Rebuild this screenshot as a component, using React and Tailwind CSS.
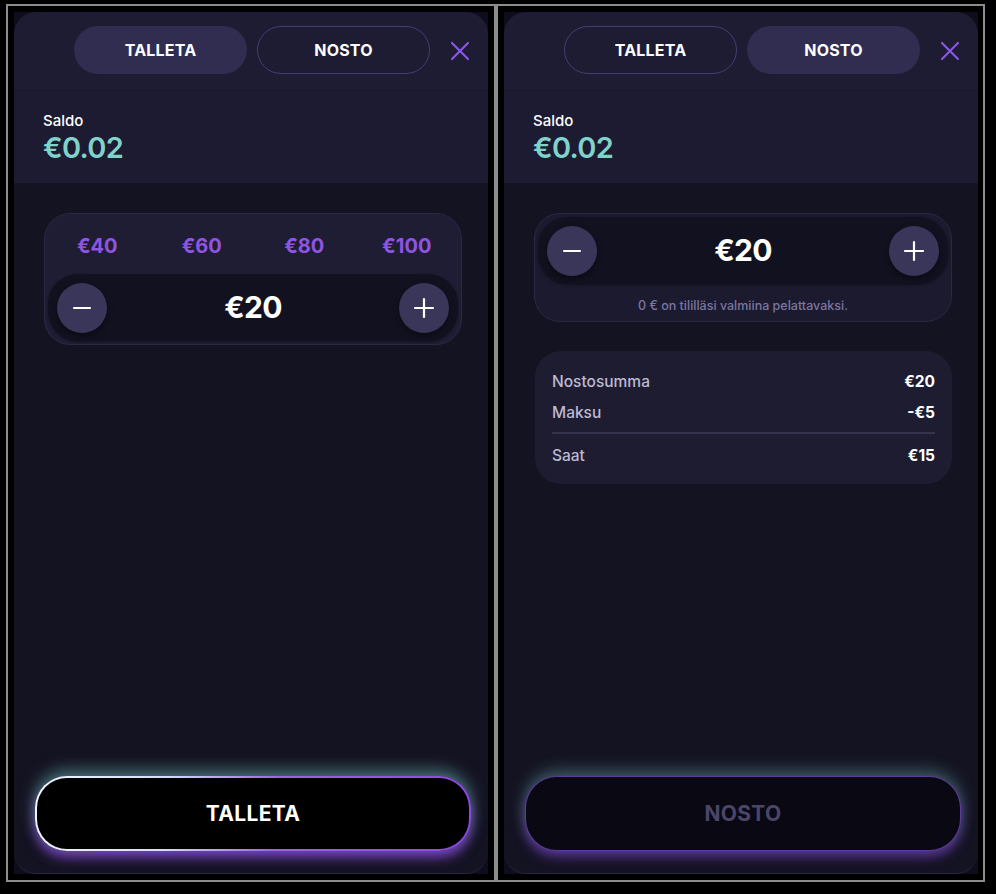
import React from "react";

const font = { fontFamily: "Inter, 'Noto Sans', sans-serif" };

const CloseIcon = () => (
  <svg width="22" height="22" viewBox="0 0 22 22" fill="none" stroke="#8b55e6" strokeWidth="2.2" strokeLinecap="round">
    <path d="M3 3 L19 19 M19 3 L3 19" />
  </svg>
);

const MinusIcon = () => (
  <svg width="20" height="20" viewBox="0 0 20 20" fill="none" stroke="#ffffff" strokeWidth="2.2" strokeLinecap="round">
    <path d="M2 10 H18" />
  </svg>
);

const PlusIcon = () => (
  <svg width="22" height="22" viewBox="0 0 22 22" fill="none" stroke="#ffffff" strokeWidth="2.2" strokeLinecap="round">
    <path d="M2 11 H20 M11 2 V20" />
  </svg>
);

const RoundBtn = ({ children }) => (
  <div className="w-[50px] h-[50px] rounded-full bg-[#3a3659] flex items-center justify-center shadow-[0_3px_6px_rgba(0,0,0,0.45)]">
    {children}
  </div>
);

const Stepper = () => (
  <div className="h-[67px] rounded-[30px] bg-[#121120] flex items-center justify-between px-[9px] shadow-[0_1px_3px_rgba(0,0,0,0.4)]">
    <RoundBtn><MinusIcon /></RoundBtn>
    <span className="text-white text-[30px] font-bold tracking-tight">€20</span>
    <RoundBtn><PlusIcon /></RoundBtn>
  </div>
);

const Header = ({ active }) => (
  <>
    <div className="relative h-[79px] bg-[#1e1c33] border-b border-[#17162a] flex justify-center pt-[14px]">
      <div className="flex gap-[10px] ml-[2px]">
        {["TALLETA", "NOSTO"].map(t => (
          <div
            key={t}
            className={`w-[173px] h-[48px] rounded-full flex items-center justify-center text-white text-[16px] font-bold tracking-[0.2px] ${
              active === t ? "bg-[#302d50]" : "border border-[#433e70]"
            }`}
          >
            {t}
          </div>
        ))}
      </div>
      <div className="absolute right-[17px] top-[28px]">
        <CloseIcon />
      </div>
    </div>
    <div className="h-[92px] bg-[#1d1b31] pl-[29px] pt-[20px]">
      <div className="text-[15px] font-medium text-white leading-[20px]">Saldo</div>
      <div className="text-[29px] font-semibold text-[#80d3cb] leading-[34px] tracking-tight">€0.02</div>
    </div>
  </>
);

const Panel = ({ active, children, button }) => (
  <div className="w-[474px] h-[862px] bg-[#0e0d1d]">
    <div className="h-full rounded-[22px] overflow-hidden bg-[#141322] flex flex-col border-b border-[#2a2746]">
      <Header active={active} />
      <div className="flex-1 flex flex-col">
        {children}
        <div className="mt-auto pl-[21px] pr-[17px] pb-[22px]">{button}</div>
      </div>
    </div>
  </div>
);

export default function App() {
  return (
    <div className="min-h-[894px] bg-black pt-[4px] pl-[6px]" style={font}>
      <div className="flex">
        <div className="border-2 border-[#8c8c8c] p-[6px]">
          <Panel
            active="TALLETA"
            button={
              <div className="rounded-[32px] p-[2px] bg-[linear-gradient(95deg,#f2f4ff_0%,#d6dcff_30%,#9a63ec_55%,#8a48e0_100%)] shadow-[0_-6px_16px_rgba(110,190,180,0.55),0_7px_12px_rgba(140,70,225,0.75)]">
                <div className="h-[71px] rounded-[30px] bg-black flex items-center justify-center text-white text-[21px] font-bold tracking-[0.3px]">
                  TALLETA
                </div>
              </div>
            }
          >
            <div className="mt-[30px] ml-[30px] w-[418px] rounded-[26px] bg-[#1f1d33] border border-[#2b2844] p-[3px]">
              <div className="h-[57px] grid grid-cols-4 items-center text-[#8f55e2] text-[20px] font-bold">
                <span className="text-center ml-[-4px]">€40</span>
                <span className="text-center">€60</span>
                <span className="text-center">€80</span>
                <span className="text-center">€100</span>
              </div>
              <Stepper />
            </div>
          </Panel>
        </div>
        <div className="border-2 border-l-2 border-[#8c8c8c] p-[6px] pr-[5px]">
          <Panel
            active="NOSTO"
            button={
              <div className="rounded-[32px] p-[1px] bg-[#5b3a98] shadow-[0_-6px_16px_rgba(100,170,165,0.45),0_6px_12px_rgba(120,60,200,0.65)]">
                <div className="h-[73px] rounded-[31px] bg-[#0a0913] flex items-center justify-center text-[#4b4669] text-[21px] font-bold tracking-[0.3px]">
                  NOSTO
                </div>
              </div>
            }
          >
            <div className="mt-[30px] ml-[30px] w-[418px] rounded-[26px] bg-[#1c1a2f] border border-[#2b2844] p-[3px]">
              <Stepper />
              <div className="pt-[14px] pb-[4px] leading-[16px] text-center text-[12.5px] font-medium text-[#7b76a0]">
                0 € on tilillä­si valmiina pelattavaksi.
              </div>
            </div>
            <div className="mt-[29px] ml-[31px] w-[417px] rounded-[26px] bg-[#1e1c31] px-[17px] pt-[18px] pb-[16px] text-[15.5px]">
              <div className="flex justify-between h-[25px] items-center">
                <span className="text-[#bdb9d1] font-medium">Nostosumma</span>
                <span className="text-white font-bold">€20</span>
              </div>
              <div className="flex justify-between h-[25px] items-center mt-[6px]">
                <span className="text-[#bdb9d1] font-medium">Maksu</span>
                <span className="text-white font-bold">-€5</span>
              </div>
              <div className="h-[2px] bg-[#36334f] mt-[7px] mb-[9px]" />
              <div className="flex justify-between h-[25px] items-center">
                <span className="text-[#bdb9d1] font-medium">Saat</span>
                <span className="text-white font-bold">€15</span>
              </div>
            </div>
          </Panel>
        </div>
      </div>
    </div>
  );
}
